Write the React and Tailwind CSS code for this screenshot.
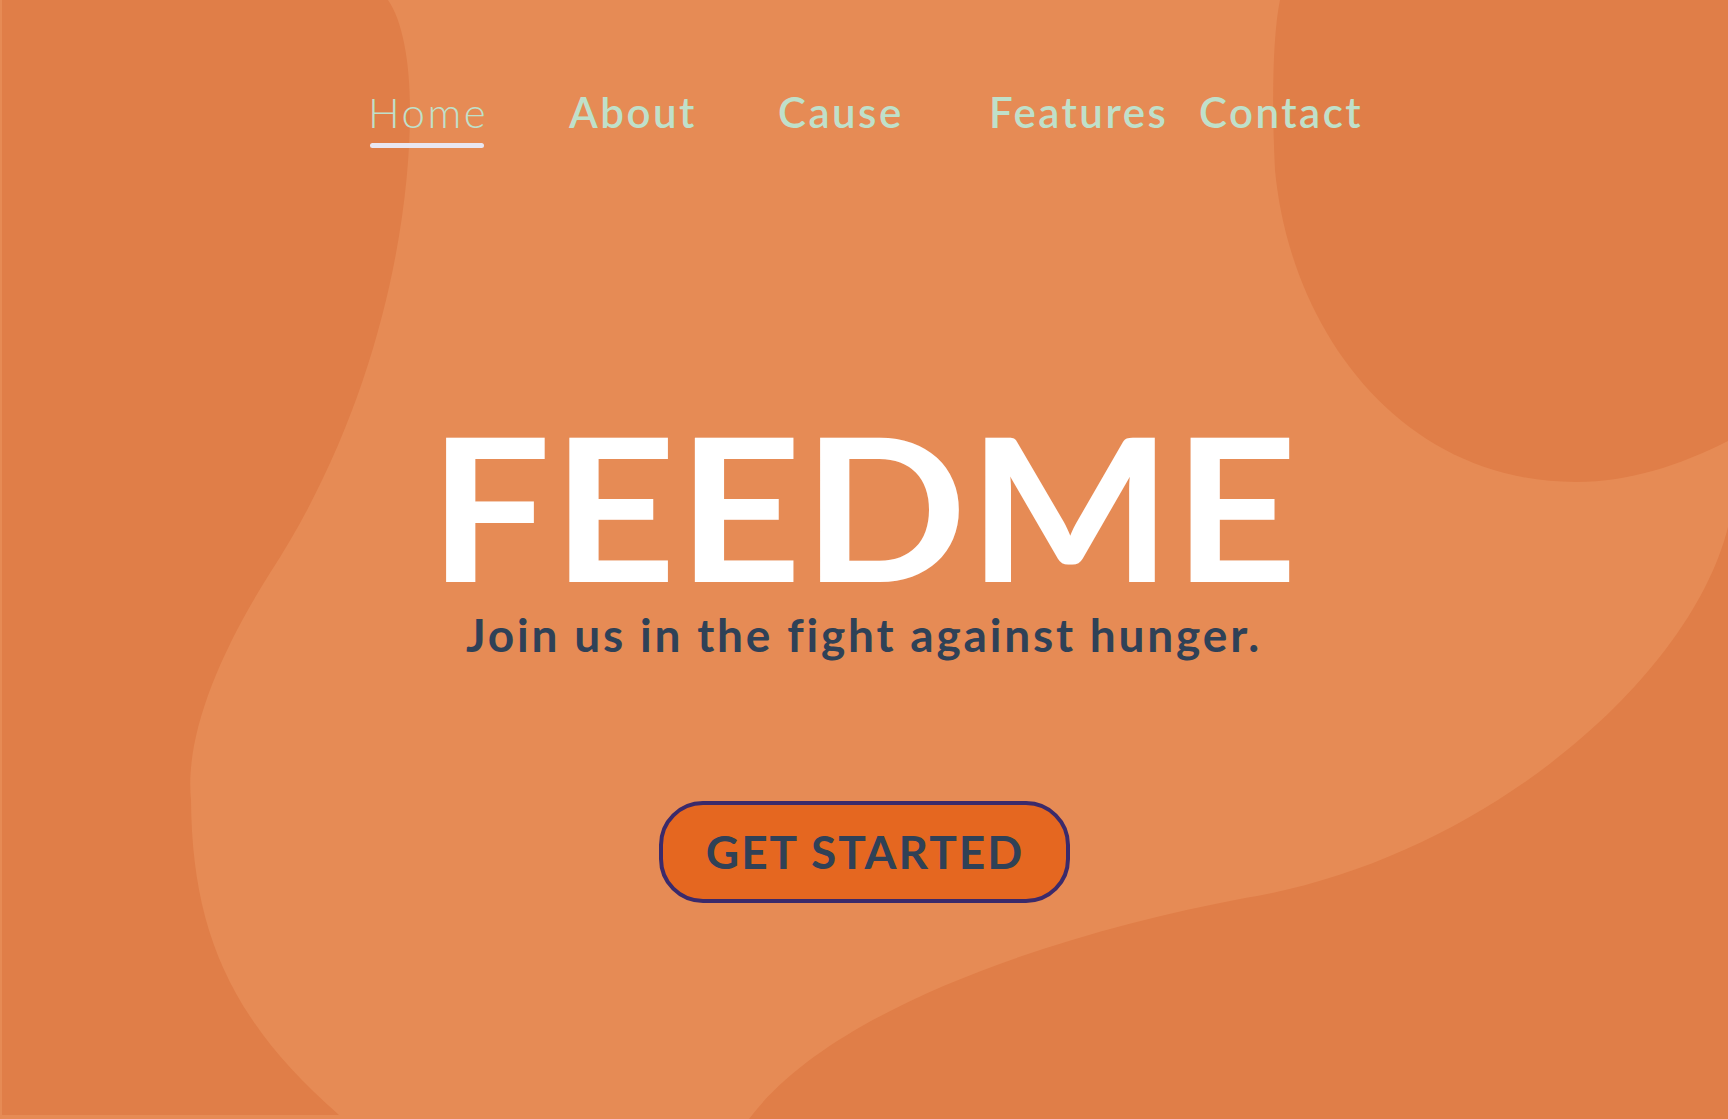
import React from "react";

const navItems = [
  { label: "Home", w: "w-[201px]", active: true },
  { label: "About", w: "w-[209px]" },
  { label: "Cause", w: "w-[211px]" },
  { label: "Features", w: "w-[210px]" },
  { label: "Contact", w: "w-auto" },
];

function Background() {
  return (
    <svg
      className="absolute inset-0 w-full h-full"
      viewBox="0 0 1728 1119"
      preserveAspectRatio="none"
      aria-hidden="true"
    >
      <path
        fill="#e07e48"
        d="M2 0 H388 C402 20 410 60 410 110 C410 240 370 420 270 573 C215 660 185 740 191 800 C192 930 230 1020 339 1115 L2 1115 Z"
      />
      <path
        fill="#e07e48"
        d="M1280 0 H1728 V441 C1680 465 1630 482 1576 482 C1400 482 1290 330 1275 170 C1272 110 1272 40 1280 0 Z"
      />
      <path
        fill="#e07e48"
        d="M1728 527 C1690 680 1480 860 1245 898 C1050 935 830 1010 749 1119 L1728 1119 Z"
      />
    </svg>
  );
}

export default function App() {
  return (
    <div className="relative w-full h-[1119px] overflow-hidden bg-[#e68b55] font-['Lato',_'Liberation_Sans',_sans-serif] [font-variant-ligatures:none]">
      <Background />
      <div className="relative flex flex-col">
        <nav className="flex pl-[368px] pt-[91px]">
          {navItems.map((item) => (
            <div key={item.label} className={`${item.w} flex flex-col items-start`}>
              <a
                href="#"
                className={`text-[42px] leading-none text-[#bfe0ca] tracking-[2.5px] ${
                  item.active ? "font-light" : "font-semibold"
                }`}
              >
                {item.label}
              </a>
              {item.active ? (
                <span className="ml-[2px] mt-[10px] h-[5px] w-[114px] rounded-full bg-[#e9e7f1]" />
              ) : null}
            </div>
          ))}
        </nav>

        <main className="flex flex-col items-center pt-[257px]">
          <h1 className="text-[200px] leading-none font-bold text-white scale-x-[1.08] tracking-[1px]">
            FEEDME
          </h1>
          <p className="mt-[7px] text-[46px] leading-none font-bold text-[#2f4157] tracking-[2.8px]">
            Join us in the fight against hunger.
          </p>
          <button
            type="button"
            className="mt-[143px] flex h-[102px] w-[411px] items-center justify-center rounded-[44px] border-[4px] border-[#3b2a6b] bg-[#e56720] pl-[2px] text-[46px] leading-none font-bold tracking-[2px] text-[#2f4157]"
          >
            GET STARTED
          </button>
        </main>
      </div>
    </div>
  );
}
